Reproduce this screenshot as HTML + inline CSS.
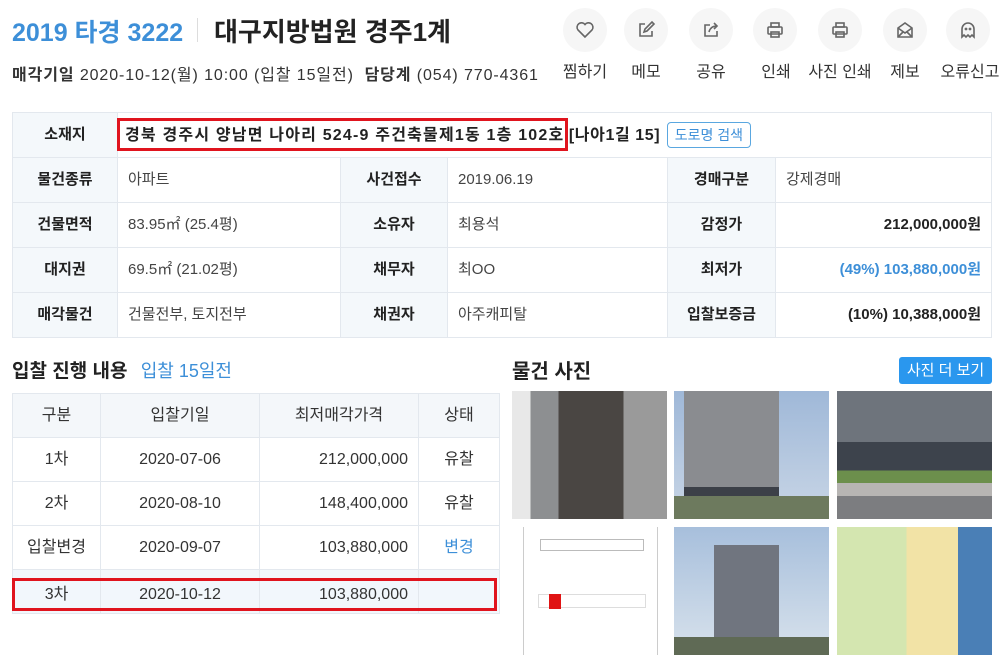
<!DOCTYPE html>
<html><head><meta charset="utf-8"><style>
*{margin:0;padding:0;box-sizing:border-box}
body{width:1006px;height:671px;background:#fff;font-family:"Liberation Sans","Noto Sans CJK KR",sans-serif;color:#222;position:relative;overflow:hidden}
.a{position:absolute;white-space:nowrap}
.ic{position:absolute;top:8px;width:44px;height:44px;border-radius:50%;background:#f6f6f6;display:flex;align-items:center;justify-content:center}
.lb{position:absolute;top:58px;font-size:16px;color:#333;width:70px;text-align:center}
table{border-collapse:collapse;position:absolute}
td{border:1px solid #e3e8ee;font-size:15px;line-height:20px;vertical-align:middle}
.t1 td{height:45px;padding:0 10px}
.t1 td.h{background:#f4f8fb;font-weight:bold;text-align:center;color:#222}
.t1 td.v{color:#444}
.t2 td{height:44px;text-align:center;font-size:16px;color:#333}
.ph{position:absolute;overflow:hidden}
</style></head><body>
<div class="a" style="left:12px;top:13px;font-size:25px;font-weight:bold;color:#3d8fd8">2019 타경 3222</div>
<div class="a" style="left:197px;top:18px;width:1px;height:24px;background:#ddd"></div>
<div class="a" style="left:214px;top:12px;font-size:26px;font-weight:bold;color:#222">대구지방법원 경주1계</div>
<div class="a" style="left:12px;top:61px;font-size:16px;color:#333;letter-spacing:0.9px"><b>매각기일</b> 2020-10-12(월) 10:00 (입찰 15일전) &nbsp;<b>담당계</b> (054) 770-4361</div>

<div class="ic" style="left:563px"><svg width="20" height="20" viewBox="0 0 20 20" fill="none" stroke="#666" stroke-width="1.6"><path d="M10 17 L3 10 A4 4 0 0 1 10 4.5 A4 4 0 0 1 17 10 Z"/></svg></div>
<div class="ic" style="left:624px"><svg width="20" height="20" viewBox="0 0 20 20" fill="none" stroke="#666" stroke-width="1.6"><path d="M9 4H4v12h12v-5"/><path d="M8 12l1-3 7-7 2 2-7 7z"/></svg></div>
<div class="ic" style="left:689px"><svg width="20" height="20" viewBox="0 0 20 20" fill="none" stroke="#666" stroke-width="1.6"><path d="M9 5H4v11h12v-5"/><path d="M8 12c1-4 4-6 8-6M13 3l3 3-3 3"/></svg></div>
<div class="ic" style="left:753px"><svg width="20" height="20" viewBox="0 0 20 20" fill="none" stroke="#666" stroke-width="1.6"><rect x="6" y="3" width="8" height="4"/><rect x="3" y="7" width="14" height="7" rx="1"/><rect x="6" y="12" width="8" height="5"/></svg></div>
<div class="ic" style="left:818px"><svg width="20" height="20" viewBox="0 0 20 20" fill="none" stroke="#666" stroke-width="1.6"><rect x="6" y="3" width="8" height="4"/><rect x="3" y="7" width="14" height="7" rx="1"/><rect x="6" y="12" width="8" height="5"/></svg></div>
<div class="ic" style="left:883px"><svg width="20" height="20" viewBox="0 0 20 20" fill="none" stroke="#666" stroke-width="1.6"><path d="M3 8l7-5 7 5v9H3z"/><path d="M3 8l7 5 7-5M3 17l5-5M17 17l-5-5"/></svg></div>
<div class="ic" style="left:946px"><svg width="20" height="20" viewBox="0 0 20 20" fill="none" stroke="#666" stroke-width="1.6"><path d="M4 17V9a6 6 0 0 1 12 0v8l-2-2-2 2-2-2-2 2-2-2z"/><circle cx="8" cy="9" r=".6"/><circle cx="12" cy="9" r=".6"/></svg></div>
<div class="lb" style="left:550px">찜하기</div>
<div class="lb" style="left:611px">메모</div>
<div class="lb" style="left:676px">공유</div>
<div class="lb" style="left:741px">인쇄</div>
<div class="lb" style="left:805px">사진 인쇄</div>
<div class="lb" style="left:870px">제보</div>
<div class="lb" style="left:935px">오류신고</div>

<table class="t1" style="left:12px;top:112px;width:980px">
<tr><td class="h" style="width:105px">소재지</td><td colspan="5" style="font-weight:bold;color:#222;font-size:16px;padding-left:7px"><span style="letter-spacing:1.2px">경북 경주시 양남면 나아리 524-9 주건축물제1동 1층 102호</span> <span style="letter-spacing:0.6px">[나아1길 15]</span> <span style="display:inline-block;border:1px solid #5aa7e0;color:#3d8fd8;border-radius:4px;padding:2px 7px;font-weight:normal;font-size:14px;margin-left:2px;letter-spacing:0">도로명 검색</span></td></tr>
<tr><td class="h">물건종류</td><td class="v" style="width:223px">아파트</td><td class="h" style="width:107px">사건접수</td><td class="v" style="width:220px">2019.06.19</td><td class="h" style="width:108px">경매구분</td><td class="v">강제경매</td></tr>
<tr><td class="h">건물면적</td><td class="v">83.95㎡ (25.4평)</td><td class="h">소유자</td><td class="v">최용석</td><td class="h">감정가</td><td style="text-align:right;font-weight:bold">212,000,000원</td></tr>
<tr><td class="h">대지권</td><td class="v">69.5㎡ (21.02평)</td><td class="h">채무자</td><td class="v">최OO</td><td class="h">최저가</td><td style="text-align:right;font-weight:bold;color:#3d8fd8">(49%) 103,880,000원</td></tr>
<tr><td class="h">매각물건</td><td class="v">건물전부, 토지전부</td><td class="h">채권자</td><td class="v">아주캐피탈</td><td class="h">입찰보증금</td><td style="text-align:right;font-weight:bold">(10%) 10,388,000원</td></tr>
</table>
<div class="a" style="left:117px;top:118px;width:451px;height:33px;border:3px solid #e0141e"></div>

<div class="a" style="left:12px;top:356px;font-size:19px;font-weight:bold">입찰 진행 내용 <span style="font-weight:normal;color:#3d8fd8;font-size:18px;margin-left:8px">입찰 15일전</span></div>
<table class="t2" style="left:12px;top:393px;width:488px">
<tr style="background:#f4f7fa"><td style="width:88px">구분</td><td style="width:159px">입찰기일</td><td style="width:159px">최저매각가격</td><td>상태</td></tr>
<tr><td>1차</td><td>2020-07-06</td><td style="text-align:right;padding-right:10px">212,000,000</td><td>유찰</td></tr>
<tr><td>2차</td><td>2020-08-10</td><td style="text-align:right;padding-right:10px">148,400,000</td><td>유찰</td></tr>
<tr><td>입찰변경</td><td>2020-09-07</td><td style="text-align:right;padding-right:10px">103,880,000</td><td style="color:#3d8fd8">변경</td></tr>
<tr style="background:#f2f7fc"><td style="height:43px;padding-top:6px">3차</td><td style="padding-top:6px">2020-10-12</td><td style="text-align:right;padding-right:10px;padding-top:6px">103,880,000</td><td></td></tr>
</table>
<div class="a" style="left:12px;top:578px;width:485px;height:33px;border:3px solid #e0141e"></div>

<div class="a" style="left:512px;top:355px;font-size:20px;font-weight:bold">물건 사진</div>
<div class="a" style="left:899px;top:357px;width:93px;height:27px;background:#2a97ee;border-radius:3px;color:#fff;font-size:15px;text-align:center;line-height:27px">사진 더 보기</div>

<div class="ph" style="left:512px;top:391px;width:155px;height:128px;background:linear-gradient(90deg,#e8e8e8 0 12%,#8d8f91 12% 30%,#4a4643 30% 72%,#9a9a9a 72% 100%)"></div>
<div class="ph" style="left:674px;top:391px;width:155px;height:128px;background:linear-gradient(180deg,#9fb8d8,#c9d6e6)"><div style="position:absolute;left:10px;top:0;width:95px;height:128px;background:linear-gradient(180deg,#8a8c90 0 75%,#3c4048 75%)"></div><div style="position:absolute;left:0;top:105px;width:155px;height:23px;background:#6d7a5e"></div></div>
<div class="ph" style="left:837px;top:391px;width:155px;height:128px;background:linear-gradient(180deg,#6e747c 0 40%,#3d434c 40% 62%,#6c8f4c 62% 72%,#b7b5b3 72% 82%,#7c7d80 82%)"></div>
<div class="ph" style="left:523px;top:527px;width:135px;height:128px;background:#fff;border-left:1px solid #ccc;border-right:1px solid #ccc"><div style="position:absolute;left:16px;top:12px;width:104px;height:12px;border:1px solid #bbb"></div><div style="position:absolute;left:14px;top:67px;width:108px;height:14px;border:1px solid #ddd"></div><div style="position:absolute;left:25px;top:67px;width:12px;height:15px;background:#e01414"></div></div>
<div class="ph" style="left:674px;top:527px;width:155px;height:128px;background:linear-gradient(180deg,#a7bfdc,#d8e2ec)"><div style="position:absolute;left:40px;top:18px;width:65px;height:100px;background:#70757f"></div><div style="position:absolute;left:0;top:110px;width:155px;height:18px;background:#5f6a55"></div></div>
<div class="ph" style="left:837px;top:527px;width:155px;height:128px;background:linear-gradient(90deg,#d4e6b0 0 45%,#f2e3a6 45% 78%,#4a7fb6 78%)"></div>
</body></html>
